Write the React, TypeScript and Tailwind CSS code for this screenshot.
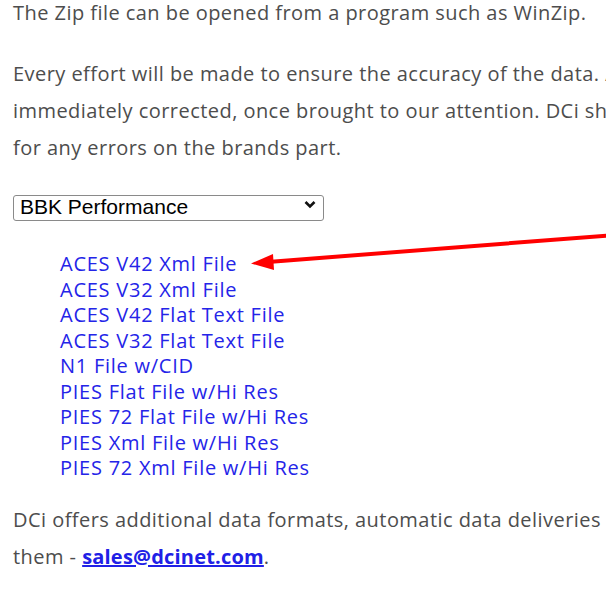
import React from "react";

const links = [
  "ACES V42 Xml File",
  "ACES V32 Xml File",
  "ACES V42 Flat Text File",
  "ACES V32 Flat Text File",
  "N1 File w/CID",
  "PIES Flat File w/Hi Res",
  "PIES 72 Flat File w/Hi Res",
  "PIES Xml File w/Hi Res",
  "PIES 72 Xml File w/Hi Res",
];

export default function App() {
  return (
    <div className="relative w-[606px] h-[594px] overflow-hidden bg-white">
      <div
        className="pl-[13px] text-[20px] tracking-[0.45px] text-[#4d4d4d] whitespace-nowrap"
        style={{ fontFamily: '"Open Sans", "DejaVu Sans", sans-serif' }}
      >
        <p className="leading-[37px] -mt-[6px]">
          The Zip file can be opened from a program such as WinZip.
        </p>
        <p className="leading-[37px] mt-[24px]">
          Every effort will be made to ensure the accuracy of the data. Any errors will be
          <br />
          immediately corrected, once brought to our attention. DCi shall not be held responsible
          <br />
          for any errors on the brands part.
        </p>
        <div className="relative mt-[26px] w-[311px] h-[26px] tracking-normal">
          <select
            className="appearance-none w-full h-full border border-[#8a8a8a] rounded-[3px] bg-white pl-[6px] pb-[3px] text-[21px] text-black leading-none"
            style={{ fontFamily: '"Liberation Sans", Arial, sans-serif' }}
            defaultValue="BBK Performance"
          >
            <option>BBK Performance</option>
          </select>
          <svg
            className="absolute right-[8px] top-[8px] pointer-events-none"
            width="12"
            height="9"
            viewBox="0 0 12 9"
          >
            <path d="M1.5 2 L6 6.5 L10.5 2" fill="none" stroke="#111" strokeWidth="2.6" />
          </svg>
        </div>
        <ul className="mt-[33px] pl-[47px] text-[#2424e8] tracking-[0.75px] leading-[25.5px]">
          {links.map((l) => (
            <li key={l}>
              <a href="#" className="no-underline">
                {l}
              </a>
            </li>
          ))}
        </ul>
        <p className="leading-[37px] mt-[20px]">
          DCi offers additional data formats, automatic data deliveries and more. Please contact
          <br />
          them -{" "}
          <a href="#" className="text-[#2020e6] font-bold underline tracking-[0.2px]">
            sales@dcinet.com
          </a>
          .
        </p>
      </div>
      <svg
        className="absolute left-0 top-0 pointer-events-none"
        width="606"
        height="594"
        viewBox="0 0 606 594"
      >
        <line x1="608" y1="235.5" x2="268" y2="262" stroke="#ff0000" strokeWidth="4" strokeLinecap="round" />
        <polygon points="251,263.5 273,254 274,270" fill="#ff0000" />
      </svg>
    </div>
  );
}
